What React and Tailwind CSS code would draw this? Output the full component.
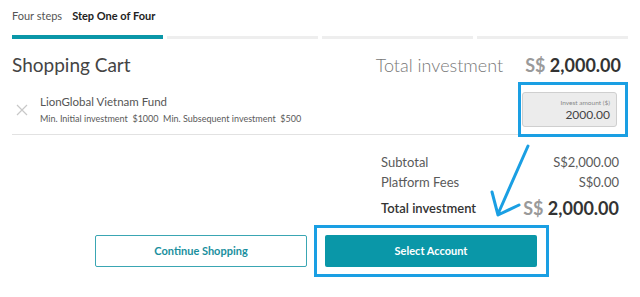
import React from "react";

const font = { fontFamily: "Lato, 'Noto Sans', sans-serif" };

function StepBar() {
  return (
    <div className="mt-[12px] grid grid-cols-4 gap-[4px]">
      <div className="h-[4px] bg-[#0a97a8]" />
      <div className="mt-px h-[3px] bg-[#eeeeee]" />
      <div className="mt-px h-[3px] bg-[#eeeeee]" />
      <div className="mt-px h-[3px] bg-[#eeeeee]" />
    </div>
  );
}

function CartLine() {
  return (
    <div className="flex h-[56px] items-center border-b border-[#e2e2e2] pt-[6px] pr-[11px]">
      <span className="ml-[4px] flex w-[24px] items-center justify-start">
        <svg width="12" height="12" viewBox="0 0 12 12" aria-hidden>
          <path d="M1 1 L11 11 M11 1 L1 11" stroke="#c8c8c8" strokeWidth="1.2" fill="none" />
        </svg>
      </span>
      <div className="flex flex-col">
        <p className="text-[11.5px] leading-[16px] text-[#555]">LionGlobal Vietnam Fund</p>
        <p className="mt-[2px] text-[9px] leading-[14px] text-[#5a5a5a]">
          Min. Initial investment&nbsp;&nbsp;$1000&nbsp;&nbsp;Min. Subsequent investment&nbsp;&nbsp;$500
        </p>
      </div>
      <div className="relative ml-auto">
        <div className="flex h-[35px] w-[95px] flex-col items-end justify-center rounded-[3px] border border-[#cfcfcf] bg-[#ececec] pr-[6px]">
          <span className="text-[6.5px] leading-[9px] text-[#888]">Invest amount ($)</span>
          <span className="text-[12px] leading-[15px] text-[#444]">2000.00</span>
        </div>
        <div className="absolute -top-[10px] -right-[11px] -bottom-[10px] -left-[4px] border-[3px] border-[#1a9fe3]" />
      </div>
    </div>
  );
}

function Summary() {
  return (
    <div className="mt-[17px] ml-auto mr-[9px] w-[238px] text-[13px] text-[#5a5a5a]">
      <div className="flex justify-between leading-[20px]">
        <span>Subtotal</span>
        <span>S$2,000.00</span>
      </div>
      <div className="flex justify-between leading-[20px]">
        <span>Platform Fees</span>
        <span>S$0.00</span>
      </div>
      <div className="mt-[3px] flex items-center justify-between leading-[26px]">
        <span className="font-semibold text-[#333]">Total investment</span>
        <span className="text-[18px] font-bold">
          <span className="text-[#9a9a9a]">S$</span> <span className="text-[#333]">2,000.00</span>
        </span>
      </div>
    </div>
  );
}

export default function App() {
  return (
    <div className="relative h-[297px] w-[640px] overflow-hidden bg-white px-3" style={font}>
      <div className="flex items-center gap-[10px] pt-[9px] text-[11px] leading-[14px]">
        <span className="text-[#555]">Four steps</span>
        <span className="font-bold text-[#222]">Step One of Four</span>
      </div>

      <StepBar />

      <div className="mt-[12px] flex items-center justify-between leading-[28px]">
        <h1 className="text-[19px] text-[#444]">Shopping Cart</h1>
        <div className="mr-[7px] flex items-center gap-[22px]">
          <span className="text-[18px] font-light text-[#777]">Total investment</span>
          <span className="text-[18px] font-bold">
            <span className="text-[#9a9a9a]">S$</span> <span className="text-[#333]">2,000.00</span>
          </span>
        </div>
      </div>

      <CartLine />

      <Summary />

      <div className="mt-[14px] flex justify-center gap-[18px] pr-[8px]">
        <button
          type="button"
          className="h-[32px] w-[212px] rounded-[2px] border border-[#3aa6b3] bg-white text-[11px] font-bold text-[#1a8f9e]"
        >
          Continue Shopping
        </button>
        <div className="relative">
          <button
            type="button"
            className="h-[32px] w-[212px] rounded-[2px] bg-[#0a97a8] text-[11px] font-bold text-white"
          >
            Select Account
          </button>
          <div className="absolute -top-[10px] -right-[12px] -bottom-[10px] -left-[11px] border-[3px] border-[#1a9fe3]" />
        </div>
      </div>

      <svg className="absolute left-0 top-0" width="640" height="297" aria-hidden>
        <path
          d="M528 146 L498 214 M492 192 L498 215 L519 205"
          stroke="#1a9fe3"
          strokeWidth="3"
          strokeLinecap="round"
          strokeLinejoin="round"
          fill="none"
        />
      </svg>
    </div>
  );
}
